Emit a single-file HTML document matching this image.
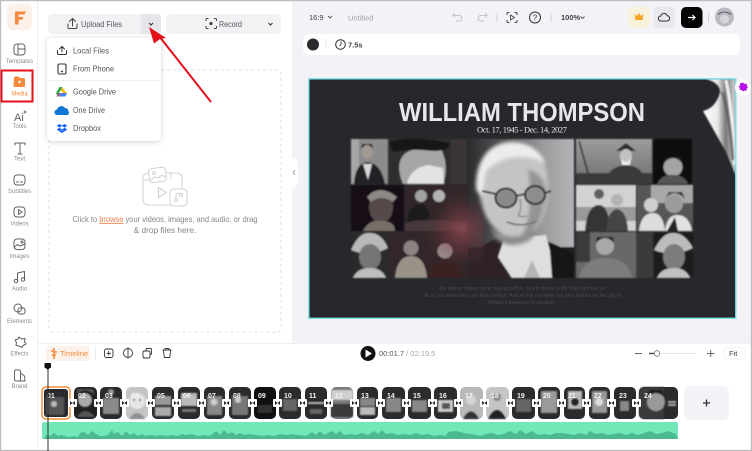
<!DOCTYPE html>
<html><head><meta charset="utf-8"><title>Media</title>
<style>
html,body{margin:0;padding:0;background:#fff;width:752px;height:451px;overflow:hidden}
svg{display:block;filter:blur(.35px)}
text{font-family:"Liberation Sans",sans-serif}
.sl{font-size:6px;fill:#8c8c92;text-anchor:middle}
.m{font-size:8.3px;fill:#55555c}
.i{fill:none;stroke:#606066;stroke-width:1;stroke-linecap:round;stroke-linejoin:round}
.tl{fill:none;stroke:#333;stroke-width:.9;stroke-linejoin:round}
.n{font-size:7px;font-weight:bold;fill:#f2f2f2}
.ph{filter:url(#b)}
</style></head><body>
<svg width="752" height="451" viewBox="0 0 752 451" xmlns="http://www.w3.org/2000/svg">
<defs>
<filter id="b" x="-10%" y="-10%" width="120%" height="120%"><feGaussianBlur stdDeviation=".7"/></filter>
<filter id="b2" x="-30%" y="-30%" width="160%" height="160%"><feGaussianBlur stdDeviation="1.800"/></filter>
<filter id="sh" x="-20%" y="-20%" width="140%" height="140%"><feDropShadow dx="0" dy="1" stdDeviation="3" flood-color="#000" flood-opacity=".18"/></filter>
<linearGradient id="bgc" x1="0" x2="1" y1="0" y2="0"><stop offset="0" stop-color="#2c2c2e"/><stop offset=".35" stop-color="#5a5a5c"/><stop offset=".7" stop-color="#9a9a9c"/><stop offset="1" stop-color="#b4b4b6"/></linearGradient>
<radialGradient id="red" gradientUnits="userSpaceOnUse" cx="462" cy="230" r="38"><stop offset="0" stop-color="#a04e5a" stop-opacity=".7"/><stop offset=".55" stop-color="#7a3a44" stop-opacity=".38"/><stop offset="1" stop-color="#4a2a30" stop-opacity="0"/></radialGradient>
<linearGradient id="curl" x1="0" x2="1" y1="0" y2="0"><stop offset="0" stop-color="#fff"/><stop offset=".45" stop-color="#e8e8e8"/><stop offset=".7" stop-color="#777"/><stop offset="1" stop-color="#d5d5d5"/></linearGradient>
<linearGradient id="suit" x1="0" x2="0" y1="0" y2="1"><stop offset="0" stop-color="#9c9c9c"/><stop offset="1" stop-color="#6e6e6e"/></linearGradient>
</defs>

<!-- backgrounds -->
<rect width="752" height="451" fill="#fff"/>
<rect x="292" y="0" width="460" height="343" fill="#f2f2f7"/>
<rect x="38" y="343" width="714" height="1" fill="#efeff2"/>
<rect x="37" y="0" width="1" height="451" fill="#efeff2"/>
<rect x="0.5" y="0.5" width="751" height="450" fill="none" stroke="#bdbdbd" stroke-width="1.400"/>

<!-- logo -->
<rect x="7" y="4" width="25" height="26" rx="5" fill="#fdf0e8"/>
<path d="M15 11.500h11l-1.500 3H18.500v2.500h5l-1.300 2.800h-3.700v4.700H15z" fill="#f58a3c"/>

<!-- sidebar -->
<rect x="14" y="44" width="11" height="11" rx="3" class="i"/><path d="M18 44v11M18 49h7" class="i"/>
<text x="19.500" y="63" class="sl">Templates</text>
<path d="M14 78a1.500 1.500 0 0 1 1.500-1.500h3l1.500 1.500h3.500a1.500 1.500 0 0 1 1.500 1.500v6a1.500 1.500 0 0 1-1.500 1.500h-8.500a1.500 1.500 0 0 1-1.500-1.500z" fill="#f58a3c"/>
<path d="M19.500 80.500v3M18 82h3" stroke="#fff" stroke-width=".9"/>
<text x="19.500" y="95.500" class="sl" style="fill:#f58a3c">Media</text>
<rect x="1.500" y="70.500" width="31" height="31" fill="none" stroke="#e3101a" stroke-width="2"/>
<text x="14" y="121" style="font-size:11px;fill:#606066">Ai</text><path d="M25 110l.6 1.400 1.400.6-1.400.6-.6 1.400-.6-1.400-1.400-.6 1.400-.6z" fill="#606066"/>
<text x="19.500" y="128" class="sl">Tools</text>
<path d="M15 145v-2h10v2M20 143v11M18 154h4" class="i"/>
<text x="19.500" y="160.500" class="sl">Text</text>
<rect x="14" y="175" width="11" height="10" rx="3" class="i"/><path d="M16.500 182h2M20.500 182h2" class="i"/>
<text x="19.500" y="193" class="sl">Subtitles</text>
<rect x="14" y="207" width="11" height="10" rx="3" class="i"/><path d="M18.500 209.500l3.500 2.500-3.500 2.500z" class="i"/>
<text x="19.500" y="225.500" class="sl">Videos</text>
<rect x="14" y="239" width="11" height="10.500" rx="3" class="i"/><circle cx="22" cy="242" r="1" class="i"/><path d="M14.500 247l3-2.500 2.500 1.500 5-2" class="i"/>
<text x="19.500" y="258" class="sl">Images</text>
<path d="M17.500 281v-8l7-1.500v8" class="i"/><circle cx="16" cy="281" r="1.800" class="i"/><circle cx="23" cy="279.500" r="1.800" class="i"/>
<text x="19.500" y="290.500" class="sl">Audio</text>
<circle cx="18" cy="308" r="4" class="i"/><rect x="18" y="308" width="7" height="6" rx="2" class="i"/>
<text x="19.500" y="323" class="sl">Elements</text>
<path d="M19 337l2.500 2 3.500-.5-.5 3.500 1.500 2-3 1.500-1 2-3-1.500-3-.5 .5-3-1.500-2.500 3-1z" class="i"/>
<text x="19.500" y="355.500" class="sl">Effects</text>
<rect x="14.500" y="370" width="6" height="11" rx="1.500" class="i"/><path d="M20.500 373l4 3 .5 5h-8" class="i"/>
<text x="19.500" y="388" class="sl">Brand</text>

<!-- upload / record -->
<rect x="48" y="14" width="113" height="20" rx="4" fill="#f2f2f5"/>
<path d="M141 14h16a4 4 0 0 1 4 4v12a4 4 0 0 1-4 4h-16z" fill="#e6e6ea"/>
<path d="M68 24v3.500a1 1 0 0 0 1 1h7a1 1 0 0 0 1-1V24M72.500 26v-7M69.500 21.500l3-3 3 3" fill="none" stroke="#444" stroke-width="1" stroke-linecap="round"/>
<text x="81" y="27" style="font-size:8.600px;fill:#55555c" textLength="41" lengthAdjust="spacingAndGlyphs">Upload Files</text>
<path d="M149 23l2 2 2-2" fill="none" stroke="#333" stroke-width="1"/>
<rect x="166" y="14" width="115" height="20" rx="5" fill="#f2f2f5"/>
<path d="M206 21v-1.500a1 1 0 0 1 1-1h1.500M214 18.500h1.500a1 1 0 0 1 1 1V21M216.500 26v1.500a1 1 0 0 1-1 1H214M208.500 28.500H207a1 1 0 0 1-1-1V26" fill="none" stroke="#444" stroke-width="1"/><circle cx="211" cy="23.500" r="1.600" fill="#444"/>
<text x="219" y="27" style="font-size:8.600px;fill:#55555c" textLength="23" lengthAdjust="spacingAndGlyphs">Record</text>
<path d="M268.500 23l2 2 2-2" fill="none" stroke="#333" stroke-width="1"/>

<!-- dashed area -->
<rect x="49" y="70" width="232" height="262" rx="4" fill="none" stroke="#dfdfe3" stroke-width="1" stroke-dasharray="3 3"/>

<!-- drop illustration -->
<g fill="none" stroke="#d4d4d8" stroke-width="1.100" stroke-linejoin="round" stroke-linecap="round">
<rect x="143" y="173" width="39" height="32" rx="5"/>
<path d="M171 173v5.500M143 180h20"/>
<rect x="149" y="168" width="17" height="14" rx="3" fill="#fff" transform="rotate(-8 157 175)"/>
<circle cx="154" cy="173" r="1.500"/><path d="M151 180l4-3 3 1 4-3 3 2"/>
<path d="M158.500 187.500l8 5-8 5z" stroke-width="1.200"/>
<rect x="170" y="189" width="17" height="17" rx="4" fill="#fff"/>
<circle cx="176" cy="200" r="1.500"/><circle cx="181" cy="195" r="1.500"/><path d="M176 198.500v-3a2 2 0 0 1 4-1"/>
</g>
<text x="165" y="222" text-anchor="middle" style="font-size:8.300px;fill:#85858a" textLength="185" lengthAdjust="spacingAndGlyphs">Click to <tspan fill="#f0804a" text-decoration="underline">browse</tspan> your videos, images, and audio, or drag</text>
<text x="165" y="233" text-anchor="middle" style="font-size:8.300px;fill:#85858a">&amp; drop files here.</text>

<!-- collapse handle -->
<path d="M292 158c4 1 6 3 6 6v18c0 3-2 5-6 6z" fill="#fff"/>
<path d="M295 170l-2 2.500 2 2.500" fill="none" stroke="#a5a5aa" stroke-width="1"/>

<!-- dropdown menu -->
<rect x="47" y="38" width="114" height="103" rx="5" fill="#fff" filter="url(#sh)"/>
<path d="M57.500 50.500v3a1 1 0 0 0 1 1h7a1 1 0 0 0 1-1v-3M62 52v-5.500M59.500 49l2.500-2.500 2.500 2.500" fill="none" stroke="#333" stroke-width="1" stroke-linecap="round"/>
<text x="73" y="53.500" class="m" textLength="36" lengthAdjust="spacingAndGlyphs">Local Files</text>
<rect x="58" y="64" width="8" height="10" rx="1.500" fill="none" stroke="#333" stroke-width="1.100"/><path d="M61 71.500h2" stroke="#333" stroke-width="1.400"/>
<text x="73" y="71.500" class="m" textLength="41" lengthAdjust="spacingAndGlyphs">From Phone</text>
<rect x="48" y="80" width="113" height="1" fill="#eeeeef"/>
<path d="M59 88l3-1 5 6.500h-3.500z" fill="#fbbc04"/><path d="M56 93l3.500-6h3l-3.500 6-1.500 3.500z" fill="#34a853"/><path d="M59 93h8l-1.500 3.500H56.500z" fill="#4285f4"/><path d="M58 93h3.500l-1.800 3.500h-3.200z" fill="#ea4335" opacity=".5"/>
<text x="73" y="94.500" class="m" textLength="43" lengthAdjust="spacingAndGlyphs">Google Drive</text>
<path d="M56 115a3 3 0 0 1 1-5.500 4.500 4.500 0 0 1 8-1.500 3.500 3.500 0 0 1 3.500 3.500 2.200 2.200 0 0 1-1 3.500z" fill="#0f78d4"/>
<text x="73" y="113" class="m" textLength="32" lengthAdjust="spacingAndGlyphs">One Drive</text>
<path d="M59.500 124l2.800 1.800-2.800 1.800-2.800-1.800zM64.500 124l2.800 1.800-2.800 1.800-2.800-1.800zM59.500 127.800l2.800 1.800-2.800 1.800-2.800-1.800zM64.500 127.800l2.800 1.800-2.800 1.800-2.800-1.800zM59.500 131.500l2.500-1.300 2.500 1.300-2.500 1.500z" fill="#0f62fe"/>
<text x="73" y="131" class="m" textLength="28" lengthAdjust="spacingAndGlyphs">Dropbox</text>

<!-- red arrow -->
<path d="M211 102L159 36" stroke="#e3101a" stroke-width="2" fill="none"/>
<path d="M149 27l17 11-6 1-6 4.500z" fill="#e3101a"/>

<!-- top bar -->
<text x="309" y="20" style="font-size:7.500px;fill:#444">16:9</text>
<path d="M328 16l2 2 2-2" fill="none" stroke="#555" stroke-width=".9"/>
<text x="348" y="20.500" style="font-size:7.500px;fill:#a0a0a6">Untitled</text>
<path d="M455 14l-2 2.500h7a3 3 0 0 1 0 5.500h-4M453 16.500l2 2" fill="none" stroke="#c5c5ca" stroke-width="1" transform="translate(0 -1)"/>
<path d="M486 14l2 2.500h-7a3 3 0 0 0 0 5.500h4M488 16.500l-2 2" fill="none" stroke="#c5c5ca" stroke-width="1" transform="translate(-1 -1)"/>
<rect x="496.500" y="13" width="1" height="9" fill="#d0d0d5"/>
<path d="M507 15v-1.500a1 1 0 0 1 1-1h1.500M514.500 12.500h1.500a1 1 0 0 1 1 1V15M517 20v1.500a1 1 0 0 1-1 1h-1.500M509.500 22.500H508a1 1 0 0 1-1-1V20" fill="none" stroke="#444" stroke-width="1"/><path d="M510.500 15l4 2.500-4 2.500z" fill="none" stroke="#444" stroke-width=".9"/>
<circle cx="535" cy="17.500" r="5.500" fill="none" stroke="#333" stroke-width="1"/>
<text x="535" y="20.500" text-anchor="middle" style="font-size:8px;fill:#333">?</text>
<rect x="550.500" y="13" width="1" height="9" fill="#d0d0d5"/>
<text x="561" y="20" style="font-size:7.500px;font-weight:bold;fill:#444">100%</text>
<path d="M580.500 16.500l2 2 2-2" fill="none" stroke="#555" stroke-width=".9"/>
<rect x="628" y="7" width="22" height="21" rx="5" fill="#f8f2dc"/>
<path d="M634.500 14l2.500 2 2-3 2 3 2.500-2-1 6h-7z" fill="#f5a623"/>
<rect x="653.500" y="7" width="21.500" height="21" rx="5" fill="#e8e8ed"/>
<path d="M661 21a2.500 2.500 0 0 1-.3-5 3.500 3.500 0 0 1 6.600-.3 2.700 2.700 0 0 1 .2 5.300z" fill="none" stroke="#333" stroke-width="1"/>
<rect x="681" y="7" width="21.500" height="21" rx="5" fill="#050505"/>
<path d="M688 17.500h7M692.500 15l2.500 2.500-2.500 2.500" fill="none" stroke="#fff" stroke-width="1.200"/>
<rect x="708" y="13" width="1" height="9" fill="#d0d0d5"/>
<circle cx="724.500" cy="17" r="9.500" fill="#b9b9c2"/>
<path d="M718 15.500q6.500-6 13 0v-2q-6.500-4-13 0z" fill="#6d6d78"/><circle cx="724.500" cy="19" r="4.500" fill="#d6d6dc"/>

<!-- toolbar -->
<rect x="303" y="34" width="437" height="21" rx="6" fill="#fff"/>
<circle cx="313" cy="44.500" r="6" fill="#2a2a2f"/>
<rect x="325.500" y="39" width="1" height="10" fill="#eaeaee"/>
<circle cx="340.500" cy="44.500" r="4.800" fill="none" stroke="#333" stroke-width="1"/>
<path d="M341 41.500v3l-1.500 1.500" fill="none" stroke="#333" stroke-width=".9"/>
<text x="348" y="47.500" style="font-size:7.500px;font-weight:bold;fill:#444">7.5s</text>

<!-- slide -->
<rect x="309" y="79" width="426.500" height="239" fill="#26282c"/>
<g class="ph">
<path d="M703 111Q716 108 720 92Q720 83 706 79H735.500V175L726 152Z" fill="url(#curl)"/>
<path d="M726 80Q733 115 735 165" stroke="#f0f0f0" stroke-width="3" fill="none"/>
<path d="M722 92Q730 115 733 160" stroke="#555" stroke-width="3" fill="none" opacity=".7"/>
</g>
<rect x="308.800" y="78.800" width="427" height="239.500" fill="none" stroke="#7fe3ea" stroke-width="1.400"/>
<text x="522" y="121" text-anchor="middle" style="font-size:25.500px;font-weight:bold;fill:#e8e8ea" textLength="246" lengthAdjust="spacingAndGlyphs">WILLIAM THOMPSON</text>
<text x="522" y="132.500" text-anchor="middle" style="font-size:8.500px;font-family:'Liberation Serif',serif;fill:#e8e8e8" textLength="90">Oct. 17, 1945 - Dec. 14, 2027</text>

<!-- collage -->
<g class="ph">
<!-- left row 1 -->
<svg x="351" y="139" width="37" height="45"><rect width="37" height="45" fill="#8c8c8c"/><rect width="8" height="45" fill="#a6a6a6"/><ellipse cx="16" cy="13" rx="5.500" ry="7" fill="#a39a92"/><path d="M10 10q6-8 12 0l-1-5H11z" fill="#1a1a1a"/><path d="M3 45q1-20 13-22 14 1 18 22z" fill="#242428"/><path d="M12 25l5 16 4-16z" fill="#d8d8d8"/></svg>
<svg x="389" y="139" width="78" height="45"><rect width="78" height="45" fill="#2e2e2e"/><rect x="62" width="16" height="45" fill="#3a3434"/><path d="M14 45C6 26 10 10 32 10h20c6 12 6 24 2 35z" fill="#a6a6a6"/><path d="M0 3Q24-4 61 4 60 12 44 12 20 9 4 13z" fill="#141414"/><path d="M18 45c2-12 12-18 22-19l14 3 1 16z" fill="#e2e2e2"/></svg>
<!-- left row 2 -->
<svg x="351" y="185" width="53" height="46"><rect width="53" height="46" fill="#131012"/><ellipse cx="30" cy="22" rx="12" ry="16" fill="#54494a"/><path d="M16 12q12-14 30 0l-4 5q-12-8-22 0z" fill="#8e8984"/><path d="M12 46q6-12 18-10 14 0 14 10z" fill="#787068"/></svg>
<svg x="405" y="185" width="62" height="46"><rect width="62" height="46" fill="#33282a"/><circle cx="16" cy="11" r="6" fill="#a2a2a2"/><circle cx="34" cy="11" r="6" fill="#b2b2b2"/><path d="M2 38q0-19 14-19 8 0 10 19z" fill="#1f1f1f"/><path d="M24 38q0-19 12-19 10 0 11 19z" fill="#2e2627"/><path d="M0 38q20-6 62 0v8H0z" fill="#4a393a"/></svg>
<!-- left row 3 -->
<svg x="351" y="232" width="37" height="46"><rect width="37" height="46" fill="#2b2b2b"/><path d="M0 18Q8 0 18 1 30 0 37 16 18 26 0 18z" fill="#b8b8b8"/><ellipse cx="19" cy="25" rx="11" ry="13" fill="#747474"/><path d="M2 46q4-10 17-10 12 0 16 10z" fill="#bdbdbd"/></svg>
<svg x="389" y="232" width="78" height="46"><rect width="78" height="46" fill="#33282a"/><circle cx="22" cy="16" r="7.500" fill="#8d8282"/><circle cx="56" cy="19" r="7.500" fill="#a39696"/><path d="M6 46q2-22 16-22 14 0 16 22z" fill="#9a9288"/><path d="M40 46q2-18 16-18 14 0 18 18z" fill="#3a2024"/></svg>
<!-- center portrait -->
<svg x="468" y="139" width="106" height="139">
<rect width="106" height="139" fill="url(#bgc)"/>
<rect y="108" width="106" height="31" fill="#1c1c1e"/>
<path d="M0 139V118Q12 106 32 98L44 139z" fill="#2e2428"/>
<path d="M72 100Q92 106 106 116V139H66z" fill="#161618"/>
<path d="M36 100L30 118 44 139H84L82 112 78 96z" fill="#dedede"/>
<path d="M56 139l8-18 8 18z" fill="#b4b4b4"/>
<g filter="url(#b2)">
<path d="M12 58C5 24 18 4 44 4c24 0 36 18 36 42 0 20-4 36-14 46-10 10-26 10-36 0C20 84 14 72 12 58z" fill="#c4c4c4"/>
<path d="M8 48C8 20 22 3 44 3c16 0 28 8 34 22C62 14 34 15 18 32c-2 8-3 14-3 24C11 56 9 54 8 48z" fill="#ececec"/>
<path d="M60 30q14 4 18 20-2 30-14 42-6 4-10 4 12-22 6-66z" fill="#949494"/>
<path d="M22 88Q42 106 66 90L64 100Q44 112 28 100z" fill="#8c8c8c"/>
</g>
<ellipse cx="38" cy="59" rx="10.500" ry="9.500" fill="#8a8a8c" stroke="#2a2a2c" stroke-width="2"/>
<ellipse cx="67" cy="56" rx="10" ry="9" fill="#8e8e90" stroke="#2a2a2c" stroke-width="2"/>
<path d="M48 57l9-2M14 52l14 3M77 54l6-2" stroke="#2a2a2c" stroke-width="1.800"/>
<path d="M52 60q2 12 -2 16 4 3 9 1" stroke="#8a8a8a" stroke-width="1.400" fill="none"/>
<path d="M39 83q14 6 30-1" stroke="#6a6a6a" stroke-width="1.500" fill="none"/>
</svg>
<!-- right row 1 -->
<svg x="576" y="139" width="76" height="45"><rect width="76" height="45" fill="url(#suit)"/><rect y="34" width="76" height="11" fill="#3a3a3a"/><path d="M3 2l9 32" stroke="#222" stroke-width="1.500"/><path d="M40 12l10-8 10 8z" fill="#2e2e2e"/><ellipse cx="50" cy="17" rx="6" ry="7" fill="#c2c2c2"/><path d="M45 19q5 8 10 0l-1 7h-8z" fill="#eee"/><path d="M28 45q4-18 22-19 18 1 20 19z" fill="#3b3b3b"/></svg>
<svg x="653" y="139" width="39" height="45"><rect width="39" height="45" fill="#0c0c0c"/><circle cx="20" cy="28" r="9.500" fill="#a4a4a4"/><path d="M11 24q9-10 18 0l-2-6H13z" fill="#222"/><path d="M4 45q5-10 16-9 12 0 15 9z" fill="#555"/></svg>
<!-- right row 2 -->
<svg x="576" y="185" width="60" height="46"><rect width="60" height="46" fill="#d2d2d2"/><rect y="22" width="60" height="14" fill="#9a9a9a"/><circle cx="23" cy="9" r="5" fill="#5e5e5e"/><circle cx="41" cy="15" r="6" fill="#b4b4b4"/><path d="M9 46q2-26 14-26 10 0 11 26z" fill="#353535"/><path d="M30 46q1-20 11-22 10 2 11 22z" fill="#454545"/></svg>
<svg x="637" y="185" width="56" height="46"><rect width="56" height="46" fill="#565656"/><rect x="14" width="42" height="18" fill="#a8a8a8"/><circle cx="14" cy="20" r="7" fill="#cfcfcf"/><circle cx="37" cy="19" r="9" fill="#9c9c9c"/><path d="M28 14q9-12 20 0l-3-7H32z" fill="#2e2e2e"/><path d="M2 46q2-18 14-18 10 0 12 18z" fill="#ddd"/><path d="M28 46q2-16 12-16 12 0 15 16z" fill="#e2e2e2"/><path d="M30 46l8-14 3 14" fill="#222"/></svg>
<!-- right row 3 -->
<svg x="576" y="232" width="77" height="46"><rect width="77" height="46" fill="#686868"/><path d="M0 0h14v30H0zM60 0h17v46H60z" fill="#3a3a3a"/><circle cx="29" cy="14" r="9" fill="#a8a8a8"/><path d="M20 11q9-10 18 0l-1-6H21z" fill="#1e1e1e"/><path d="M3 46q4-20 26-20 24 0 27 20z" fill="#7c7c7c"/></svg>
<svg x="654" y="232" width="39" height="46"><rect width="39" height="46" fill="#1e1e1e"/><path d="M0 18Q9 0 19 1 30 0 39 16 19 26 0 18z" fill="#bcbcbc"/><ellipse cx="20" cy="25" rx="11" ry="13" fill="#7c7c7c"/><path d="M3 46q4-10 17-10 12 0 16 10z" fill="#c0c0c0"/></svg>
<rect x="424" y="192" width="60" height="86" fill="url(#red)"/>
</g>
<g text-anchor="middle" style="font-size:5.500px;fill:#47494e">
<text x="522" y="290" textLength="167">We gather today not to say goodbye, but to honor a life that touched us</text>
<text x="522" y="297" textLength="198">all. In our memories, we find comfort. And in this moment, we give thanks for the gift of</text>
<text x="522" y="304" textLength="69">William's presence in our lives.</text>
</g>
<!-- plugin badge -->
<circle cx="743" cy="87.500" r="8" fill="#fff"/>
<path d="M740 83.500l3-1 1.500 1.500 2-.5.5 2.500 1 1.500-1.500 1.500 0 2-2-.5-1.500 1-1.500-1.500-2 0 .5-2-1.500-1.500 1.500-1z" fill="#b513ea"/>

<!-- timeline header -->
<rect x="46" y="346" width="44" height="15" rx="3" fill="#fdf1ea"/>
<path d="M54 348v11M51 351h3M52 355h4M54 352h3" stroke="#f58a3c" stroke-width="1.500"/>
<text x="60" y="356" style="font-size:7.500px;fill:#f58a3c">Timeline</text>
<rect x="95" y="347" width="1" height="12" fill="#eaeaee"/>
<rect x="104.500" y="349" width="8.500" height="8.500" rx="2" class="tl"/><path d="M108.700 351v4.500M106.500 353.300h4.500" class="tl"/>
<circle cx="128" cy="353" r="4.500" class="tl"/><path d="M128 347.500v11" class="tl"/>
<rect x="143" y="351" width="7" height="7" rx="1.500" class="tl"/><path d="M146 351v-1.500a1 1 0 0 1 1-1h3.500a1 1 0 0 1 1 1v4a1 1 0 0 1-1 1H150" class="tl"/>
<path d="M162.500 350h9M165 350v-1.500h4v1.500M163.500 350l.8 7.500h5.500l.8-7.500" class="tl"/>

<!-- play -->
<circle cx="368" cy="353.500" r="7.500" fill="#111"/><path d="M365.500 349.500l6.500 4-6.500 4z" fill="#fff"/>
<text x="379" y="356" style="font-size:7.500px;fill:#555">00:01.7 <tspan fill="#aaa">/ 02:19.5</tspan></text>
<rect x="635" y="353" width="7" height="1" fill="#666"/>
<rect x="649" y="352.800" width="6" height="1.400" fill="#444"/><rect x="655" y="353" width="40" height="1" fill="#e6e6ea"/>
<circle cx="657" cy="353.500" r="2.800" fill="#fff" stroke="#777" stroke-width=".8"/>
<path d="M707 353.500h7.500M710.700 350v7" stroke="#666" stroke-width="1"/>
<rect x="724" y="348" width="21" height="11" rx="3" fill="#fff" stroke="#f1f1f3"/>
<text x="729" y="356" style="font-size:7.500px;fill:#444">Fit</text>

<!-- thumbs -->
<g>
<rect x="42" y="387" width="28" height="32" rx="4" fill="none" stroke="#f0923f" stroke-width="1.500"/>
<rect x="44" y="389" width="24" height="28" rx="3" fill="#2a2a2e"/>
<rect x="74" y="387" width="23" height="32" rx="5" fill="#202020"/>
<rect x="100" y="387" width="22" height="32" rx="5" fill="#2b2b2e"/>
<rect x="126" y="387" width="22" height="32" rx="5" fill="#c5c5c5"/>
<rect x="152" y="387" width="22" height="32" rx="5" fill="#2b2b2e"/>
<rect x="178" y="387" width="22" height="32" rx="5" fill="#2b2b2e"/>
<rect x="204" y="387" width="21" height="32" rx="5" fill="#2b2b2e"/>
<rect x="229" y="387" width="22" height="32" rx="5" fill="#2b2b2e"/>
<rect x="254" y="387" width="22" height="32" rx="5" fill="#101010"/>
<rect x="279" y="387" width="22" height="32" rx="5" fill="#2b2b2e"/>
<rect x="305" y="387" width="22" height="32" rx="5" fill="#2b2b2e"/>
<rect x="331" y="387" width="22" height="32" rx="5" fill="#7a7a7a"/>
<rect x="357" y="387" width="21" height="32" rx="5" fill="#2b2b2e"/>
<rect x="382" y="387" width="23" height="32" rx="5" fill="#2b2b2e"/>
<rect x="408" y="387" width="23" height="32" rx="5" fill="#2b2b2e"/>
<rect x="434" y="387" width="23" height="32" rx="5" fill="#2b2b2e"/>
<rect x="460" y="387" width="23" height="32" rx="5" fill="#b8b8b8"/>
<rect x="486" y="387" width="23" height="32" rx="5" fill="#c5c5c5"/>
<rect x="512" y="387" width="23" height="32" rx="5" fill="#2b2b2e"/>
<rect x="538" y="387" width="22" height="32" rx="5" fill="#2b2b2e"/>
<rect x="564" y="387" width="21" height="32" rx="5" fill="#2b2b2e"/>
<rect x="589" y="387" width="21" height="32" rx="5" fill="#2b2b2e"/>
<rect x="614" y="387" width="22" height="32" rx="5" fill="#2b2b2e"/>
<rect x="639" y="387" width="39" height="32" rx="5" fill="#2b2b2e"/>
</g>
<g class="ph">
<rect x="46" y="397" width="18" height="18" fill="#666" opacity=".7"/><circle cx="54" cy="404" r="3" fill="#bbb"/>
<circle cx="85" cy="400" r="7" fill="#aaa"/><path d="M76 395q9-9 19 0l-2-6H78z" fill="#555"/><path d="M77 417q8-12 18 0z" fill="#555"/>
<rect x="103" y="398" width="16" height="16" fill="#8a8a8a"/><circle cx="111" cy="392" r="3" fill="#999"/>
<circle cx="137" cy="401" r="8" fill="#e6e6e6"/><path d="M129 419q8-12 16 0z" fill="#909090"/><circle cx="134" cy="400" r="1" fill="#333"/><circle cx="140" cy="400" r="1" fill="#333"/>
<rect x="155" y="396" width="16" height="9" fill="#999"/><rect x="155" y="407" width="16" height="9" fill="#aaa"/>
<rect x="181" y="393" width="16" height="13" fill="#bbb"/><rect x="182" y="409" width="14" height="3" fill="#777"/>
<rect x="207" y="396" width="15" height="19" fill="#888"/><circle cx="214" cy="402" r="3.500" fill="#ccc"/>
<rect x="232" y="396" width="16" height="19" fill="#777"/><circle cx="238" cy="400" r="3" fill="#ccc"/>
<rect x="258" y="405" width="14" height="8" fill="#333"/>
<rect x="283" y="399" width="14" height="12" fill="#666"/>
<rect x="308" y="402" width="16" height="2" fill="#bbb"/><rect x="310" y="409" width="12" height="5" fill="#666"/>
<rect x="331" y="404" width="22" height="13" fill="#3a3a3a"/><rect x="331" y="390" width="22" height="10" fill="#cfcfcf"/>
<rect x="360" y="398" width="15" height="8" fill="#888"/><rect x="360" y="407" width="15" height="8" fill="#bbb"/>
<rect x="386" y="398" width="15" height="14" fill="#888"/>
<rect x="412" y="400" width="15" height="12" fill="#888"/>
<rect x="438" y="400" width="15" height="12" fill="#ccc"/><rect x="442" y="403" width="8" height="6" fill="#555"/>
<circle cx="471" cy="400" r="5" fill="#d5d5d5"/><path d="M463 419q8-15 16 0z" fill="#333"/>
<circle cx="497" cy="397" r="4" fill="#888"/><path d="M488 419q9-18 18 0z" fill="#222"/>
<rect x="516" y="399" width="15" height="13" fill="#666"/>
<rect x="541" y="391" width="16" height="22" fill="#9a9a9a"/>
<rect x="568" y="391" width="14" height="18" fill="#bbb"/><circle cx="575" cy="402" r="4" fill="#222"/>
<rect x="592" y="391" width="15" height="22" fill="#999"/><circle cx="599" cy="402" r="4" fill="#ddd"/>
<rect x="620" y="401" width="9" height="10" fill="#888"/>
<path d="M639 392a5 5 0 0 1 5-5h20v32h-20a5 5 0 0 1-5-5z" fill="#3a3a3a"/><circle cx="656" cy="402" r="9" fill="#999"/><path d="M647 398q9-10 18 0l-3-8h-12z" fill="#1c1c1c"/>
<rect x="668" y="401" width="8" height="2" fill="#aaa"/><rect x="668" y="404" width="8" height="2" fill="#aaa"/>
</g>
<g class="n">
<text x="47" y="398">01</text><text x="78" y="398">02</text><text x="105" y="398">03</text><text x="131" y="398">04</text><text x="157" y="398">05</text><text x="183" y="398">06</text><text x="208" y="398">07</text><text x="233" y="398">08</text><text x="258" y="398">09</text><text x="284" y="398">10</text><text x="309" y="398">11</text><text x="335" y="398">12</text><text x="361" y="398">13</text><text x="387" y="398">14</text><text x="413" y="398">15</text><text x="439" y="398">16</text><text x="465" y="398">17</text><text x="491" y="398">18</text><text x="517" y="398">19</text><text x="543" y="398">20</text><text x="568" y="398">21</text><text x="594" y="398">22</text><text x="619" y="398">23</text><text x="644" y="398">24</text>
</g>
<!-- transition chips -->
<g fill="#fff"><rect x="68" y="399" width="9" height="8" rx="1"/><rect x="94" y="399" width="9" height="8" rx="1"/><rect x="120" y="399" width="9" height="8" rx="1"/><rect x="146" y="399" width="9" height="8" rx="1"/><rect x="172" y="399" width="9" height="8" rx="1"/><rect x="197" y="399" width="9" height="8" rx="1"/><rect x="222" y="399" width="9" height="8" rx="1"/><rect x="248" y="399" width="9" height="8" rx="1"/><rect x="273" y="399" width="9" height="8" rx="1"/><rect x="298" y="399" width="9" height="8" rx="1"/><rect x="324" y="399" width="9" height="8" rx="1"/><rect x="350" y="399" width="9" height="8" rx="1"/><rect x="376" y="399" width="9" height="8" rx="1"/><rect x="402" y="399" width="9" height="8" rx="1"/><rect x="428" y="399" width="9" height="8" rx="1"/><rect x="454" y="399" width="9" height="8" rx="1"/><rect x="480" y="399" width="9" height="8" rx="1"/><rect x="506" y="399" width="9" height="8" rx="1"/><rect x="532" y="399" width="9" height="8" rx="1"/><rect x="557" y="399" width="9" height="8" rx="1"/><rect x="582" y="399" width="9" height="8" rx="1"/><rect x="607" y="399" width="9" height="8" rx="1"/><rect x="632" y="399" width="9" height="8" rx="1"/></g>
<g fill="#222"><path d="M70 401v4l2.500-2zM75 401v4l-2.500-2z"/><path d="M96 401v4l2.500-2zM101 401v4l-2.500-2z"/><path d="M122 401v4l2.500-2zM127 401v4l-2.500-2z"/><path d="M148 401v4l2.500-2zM153 401v4l-2.500-2z"/><path d="M174 401v4l2.500-2zM179 401v4l-2.500-2z"/><path d="M199 401v4l2.500-2zM204 401v4l-2.500-2z"/><path d="M224 401v4l2.500-2zM229 401v4l-2.500-2z"/><path d="M250 401v4l2.500-2zM255 401v4l-2.500-2z"/><path d="M275 401v4l2.500-2zM280 401v4l-2.500-2z"/><path d="M300 401v4l2.500-2zM305 401v4l-2.500-2z"/><path d="M326 401v4l2.500-2zM331 401v4l-2.500-2z"/><path d="M352 401v4l2.500-2zM357 401v4l-2.500-2z"/><path d="M378 401v4l2.500-2zM383 401v4l-2.500-2z"/><path d="M404 401v4l2.500-2zM409 401v4l-2.500-2z"/><path d="M430 401v4l2.500-2zM435 401v4l-2.500-2z"/><path d="M456 401v4l2.500-2zM461 401v4l-2.500-2z"/><path d="M482 401v4l2.500-2zM487 401v4l-2.500-2z"/><path d="M508 401v4l2.500-2zM513 401v4l-2.500-2z"/><path d="M534 401v4l2.500-2zM539 401v4l-2.500-2z"/><path d="M559 401v4l2.500-2zM564 401v4l-2.500-2z"/><path d="M584 401v4l2.500-2zM589 401v4l-2.500-2z"/><path d="M609 401v4l2.500-2zM614 401v4l-2.500-2z"/><path d="M634 401v4l2.500-2zM639 401v4l-2.500-2z"/></g>

<!-- add -->
<rect x="684" y="386" width="45" height="34" rx="6" fill="#f3f3f7"/>
<path d="M703 403h7M706.500 399.500v7" stroke="#333" stroke-width="1.300"/>

<!-- audio track -->
<rect x="42" y="422" width="636" height="17" rx="2" fill="#72e8b9"/>
<path d="M44 439L46 435 50 436 54 433 58 436 62 435 68 437 74 436 78 437 80 433 84 432 88 435 92 431 96 434 100 436 104 436 108 435 112 430 114 434 118 432 122 436 126 431 130 435 134 433 138 436 142 434 146 436 150 435 156 436 160 435 166 436 172 435 178 436 182 434 186 435 192 434 198 436 204 435 210 436 216 431 220 435 224 430 228 434 232 432 236 435 240 433 244 435 250 434 256 435 262 436 268 435 274 436 280 434 286 435 292 434 296 435 300 435 306 436 312 432 316 435 320 431 324 435 328 433 332 431 336 434 340 431 344 435 350 434 356 435 362 433 368 435 374 431 378 434 382 430 386 434 392 433 398 435 404 434 410 435 416 433 422 435 428 434 434 436 440 435 446 436 448 432 456 431 464 433 470 434 476 435 480 436 486 434 492 433 498 435 504 434 510 431 516 434 520 430 526 434 532 431 538 435 544 434 550 435 556 433 562 433 568 434 574 435 580 433 586 435 590 431 596 434 602 433 608 435 614 434 620 433 626 435 632 433 638 435 644 433 650 431 656 434 662 433 668 431 676 434 678 439Z" fill="#4cba91"/>

<!-- playhead -->
<rect x="44.500" y="363" width="6.500" height="5" rx="1" fill="#111"/><path d="M44.500 367l3.200 3 3.300-3z" fill="#111"/>
<rect x="47.500" y="369" width="1" height="82" fill="#333"/>
</svg>
</body></html>
